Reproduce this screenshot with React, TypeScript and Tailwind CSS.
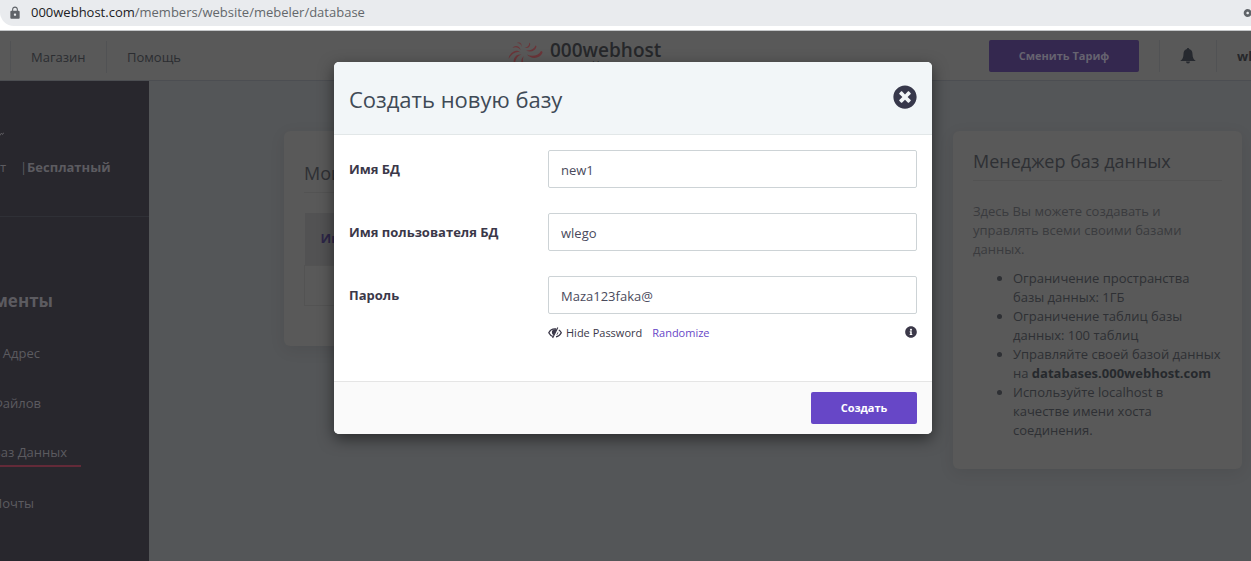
import { useState } from "react";
import type { ReactNode } from "react";
import { FaInfoCircle, FaTimesCircle } from "react-icons/fa";
import { MdLock, MdVpnKey } from "react-icons/md";

function AddressBar() {
  return (
    <div className="h-[31px] overflow-hidden border-b border-[#c4c6c8] bg-white">
      <div className="flex h-[26px] items-center rounded-bl-[14px] bg-[#e9ebee] pl-2 text-[13px]">
        <MdLock className="mr-[9px] size-[14px] text-[#5f6368]" />
        <span className="text-[#202124]">000webhost.com</span>
        <span className="flex-1 text-[#63676b]">/members/website/mebeler/database</span>
        <div className="w-2 overflow-hidden">
          <MdVpnKey className="size-4 text-[#5f6368]" />
        </div>
      </div>
    </div>
  );
}

function Swirl() {
  return (
    <svg viewBox="0 0 36 32" className="h-8 w-9" fill="#6b3539">
      <path d="M19 14.500c5 2.500 11 1.500 14-3.500 1 .2 1.600.8 1.500 1.500-2 6-11 7.500-15.500 2z" />
      <path d="M18 10.500c5 .3 8-1.500 9.500-5 .8.300 1 .8.900 1.500-1.400 4.200-5.900 5.700-10.400 3.500z" />
      <path d="M16.500 7.500c3 0 4.800-1.800 4.800-4.800.6.200.9.800.9 1.500-.2 3-2.700 4.500-5.700 3.300z" />
      <path d="M13.500 7C13.500 4.500 12 3.200 9 3c2.500-1.300 5.500.8 4.500 4z" />
      <path d="M12.500 10C10.500 7.200 7.500 6.700 4.500 8c1.800-3.200 7.500-2.600 8 2z" />
      <path d="M12.500 12.500C8.500 11 4 13 .5 19 1.200 12.500 8.500 8 12.500 12.500z" />
      <path d="M13.500 14.500C9 16 6.500 20 7 27c-3.500-6.500-.3-13.500 6.500-12.500z" />
      <path d="M16 16c-2.500 4-1 9.500 5 12.500-7-.5-10.500-8-5-12.500z" />
    </svg>
  );
}

function Bell() {
  return (
    <svg viewBox="0 0 16 16" className="size-4" fill="currentColor" aria-hidden="true">
      <path d="M8 0c.7 0 1.100.4 1.100 1.100C11.500 1.600 12.500 3.500 12.500 6c0 3.500 1 5.500 3.300 7H.2C2.500 11.500 3.500 9.500 3.500 6c0-2.500 1-4.400 3.400-4.900C6.900.4 7.300 0 8 0z" />
      <path d="M6 13.500h4a2 2 0 0 1-4 0z" />
    </svg>
  );
}

function EyeSlash() {
  return (
    <svg viewBox="0 0 14 12" className="h-3 w-[14px]" fill="none" stroke="currentColor" aria-hidden="true">
      <path d="M8 2C4.500 1.500 2 3.500.8 5.700 1.700 7.500 3 8.800 5 9.500" strokeWidth="1.300" />
      <path d="M10.800 3c1.200.7 2 1.700 2.500 2.700-1.100 2.200-3 3.800-5.300 4.100" strokeWidth="1.300" />
      <path d="M7.800 2.300C5.300 1.800 3.600 3.500 3.900 5.500 4 6.900 4.800 7.800 5.800 8.200L8.600 3z" fill="currentColor" stroke="none" />
      <path d="M9.800.5 4.600 11" strokeWidth="1.200" />
      <path d="M10.200 4.500c.2 1.600-.4 2.900-1.900 3.600z" fill="currentColor" stroke="none" />
    </svg>
  );
}

function Header() {
  return (
    <header className="flex h-[50px] items-center border-b border-[#4c4e52] bg-[#595959]">
      <nav className="flex w-[508px] shrink-0 pt-[2px] text-[13px] leading-8 text-[#2b2d31]">
        <a href="#shop" className="ml-[10px] w-24 border-l border-[#515254] pl-5">Магазин</a>
        <a href="#help" className="border-l border-[#515254] pl-5">Помощь</a>
      </nav>
      <a href="#home" className="flex shrink-0 items-start gap-[6px] self-start pt-[9px]">
        <Swirl />
        <span className="flex flex-col text-right">
          <span className="text-[19px] leading-5 font-semibold text-[#26272a]">000webhost</span>
          <span className="text-[9px] leading-[10px] text-[#26272a]">
            powered by <b>HOSTINGER</b>
          </span>
        </span>
      </a>
      <div className="ml-auto flex shrink-0 items-center">
        <button type="button" className="h-8 w-[150px] rounded-xs bg-[#34284f] pt-px text-[11px] font-bold text-[#666370]">
          Сменить Тариф
        </button>
        <button type="button" aria-label="Уведомления" className="ml-5 flex h-8 w-[58px] items-center justify-center border-x border-[#515254] text-[#26292f]">
          <Bell />
        </button>
        <span className="ml-5 w-[14px] overflow-hidden pt-[2px] text-[13px] font-bold text-[#26272a]">wlego</span>
      </div>
    </header>
  );
}

function SideLink({ children, width, active }: { children: ReactNode; width: string; active?: boolean }) {
  return (
    <div className="flex h-[50px] items-center">
      <a
        href="#section"
        className={`flex h-[26px] items-center justify-end overflow-hidden whitespace-nowrap ${width} ${
          active ? "border-b-2 border-[#632a38] pr-[14px]" : ""
        }`}
      >
        {children}
      </a>
    </div>
  );
}

function Sidebar() {
  return (
    <aside className="w-[149px] shrink-0 overflow-hidden bg-[#28272d] text-[13px] text-[#5c5b60]">
      <div className="flex h-[136px] flex-col justify-end border-b border-[#2f3036] pb-[39px]">
        <svg viewBox="0 0 4 4" className="mb-[22px] size-1" fill="none" stroke="currentColor" aria-hidden="true">
          <path d="M0 3.500 1.500 1 2.500 2.500 4 .5" />
        </svg>
        <p className="flex">
          <span className="w-5">т</span>
          <span className="w-[7px]">|</span>
          <b>Бесплатный</b>
        </p>
      </div>
      <h2 className="mt-[72px] mb-[16px] flex h-6 w-[53px] items-center justify-end overflow-hidden text-[17px] font-bold whitespace-nowrap">
        менты
      </h2>
      <nav>
        <SideLink width="w-10">Адрес</SideLink>
        <SideLink width="w-[41px]">Файлов</SideLink>
        <SideLink width="w-[81px]" active>Баз Данных</SideLink>
        <SideLink width="w-[34px]">Почты</SideLink>
      </nav>
    </aside>
  );
}

function Databases() {
  return (
    <section className="h-[215px] min-w-0 flex-1 rounded-md bg-[#595959] px-5 pt-[30px] shadow-[0_4px_16px_rgba(0,0,0,0.08)]">
      <h2 className="h-8 border-b border-[#535353] text-lg leading-6 text-[#2e3034]">Мои базы данных</h2>
      <table className="mt-5 w-full text-left text-[13px]">
        <thead>
          <tr className="h-[52px] bg-[#525253]">
            <th className="pl-4 font-bold text-[#2c2547]">Имя БД</th>
          </tr>
        </thead>
        <tbody>
          <tr className="h-10 border border-[#535353]">
            <td></td>
          </tr>
        </tbody>
      </table>
    </section>
  );
}

function ManagerInfo() {
  return (
    <section className="w-[289px] shrink-0 rounded-md bg-[#595959] px-5 pt-[18px] pb-[29px] text-[13px] leading-[19px] text-[#2e3034] shadow-[0_4px_16px_rgba(0,0,0,0.08)]">
      <h2 className="mb-[21px] h-8 border-b border-[#535353] text-lg leading-6">Менеджер баз данных</h2>
      <p className="mb-[10px] text-[#3a3b3e]">Здесь Вы можете создавать и управлять всеми своими базами данных.</p>
      <ul className="list-disc pl-10">
        <li>Ограничение пространства базы данных: 1ГБ</li>
        <li>Ограничение таблиц базы данных: 100 таблиц</li>
        <li>
          Управляйте своей базой данных на <b className="text-[#26292d]">databases.000webhost.com</b>
        </li>
        <li>Используйте localhost в качестве имени хоста соединения.</li>
      </ul>
    </section>
  );
}

function Field({ id, label, initial, type = "text" }: { id: string; label: string; initial: string; type?: string }) {
  const [value, setValue] = useState(initial);
  return (
    <div className="flex items-center">
      <label htmlFor={id} className="w-[199px] shrink-0 pt-px text-[13px] font-bold">{label}</label>
      <input
        id={id}
        type={type}
        value={value}
        onChange={(e) => setValue(e.target.value)}
        className="h-[38px] min-w-0 flex-1 rounded-xs border border-[#cdd3d6] bg-white px-3 pt-[2px] text-[13px] text-[#4a4a5c] outline-none"
      />
    </div>
  );
}

function CreateDialog() {
  return (
    <div className="absolute inset-0 flex items-start justify-center pt-[62px] pl-[15px]">
      <form
        role="dialog"
        aria-labelledby="dialog-title"
        onSubmit={(e) => e.preventDefault()}
        className="w-[598px] overflow-hidden rounded-[5px] bg-white text-[#3b3849] shadow-[0_5px_15px_rgba(0,0,0,0.5)]"
      >
        <div className="flex h-[73px] items-center justify-between border-b border-[#e2e7e8] bg-[#f2f6f8] px-[15px] pb-[2px]">
          <h1 id="dialog-title" className="pt-1 text-[22px] text-[#3f4a56]">Создать новую базу</h1>
          <button type="button" aria-label="Закрыть" className="text-[#37384b]">
            <FaTimesCircle className="size-6" />
          </button>
        </div>
        <div className="flex flex-col gap-[25px] px-[15px] pt-[15px]">
          <Field id="db-name" label="Имя БД" initial="new1" />
          <Field id="db-user" label="Имя пользователя БД" initial="wlego" />
          <Field id="db-pass" label="Пароль" initial="Maza123faka@" />
        </div>
        <div className="flex h-[67px] items-start pt-[9px] pr-[15px] pl-[214px] text-[11px] leading-5">
          <button type="button" className="flex items-center gap-1">
            <EyeSlash />
            Hide Password
          </button>
          <button type="button" className="ml-[10px] text-[#6747c7]">Randomize</button>
          <FaInfoCircle className="mt-[3px] ml-auto size-3" />
        </div>
        <div className="flex h-[53px] items-center justify-end border-t border-[#e5e5e5] bg-[#fafafa] px-[15px]">
          <button type="submit" className="h-8 w-[106px] rounded-xs bg-[#6747c7] pt-px text-[11px] font-bold text-white">
            Создать
          </button>
        </div>
      </form>
    </div>
  );
}

export default function App() {
  return (
    <div className="relative flex min-h-screen flex-col overflow-hidden bg-[#545658] font-['Open_Sans','Noto_Sans',sans-serif]">
      <AddressBar />
      <Header />
      <div className="flex flex-1">
        <Sidebar />
        <main className="flex min-w-0 flex-1 items-start gap-[30px] pt-[50px] pr-[9px] pl-[135px]">
          <Databases />
          <ManagerInfo />
        </main>
      </div>
      <CreateDialog />
    </div>
  );
}
